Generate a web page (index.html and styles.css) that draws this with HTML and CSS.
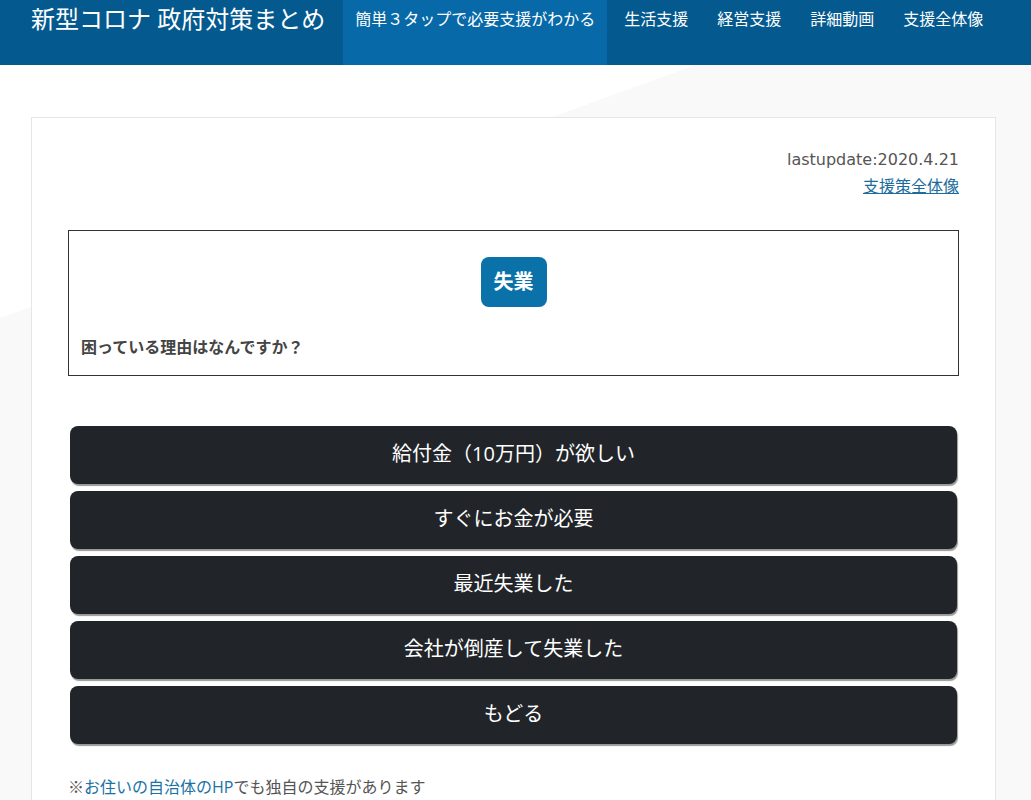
FILE: index.html
```html
<!DOCTYPE html>
<html lang="ja">
<head>
<meta charset="utf-8">
<title>新型コロナ 政府対策まとめ</title>
<link rel="stylesheet" href="styles.css">
</head>
<body>
<header class="topbar">
  <div class="brand">新型コロナ 政府対策まとめ</div>
  <nav>
    <ul class="nav">
      <li class="active"><a href="#">簡単３タップで必要支援がわかる</a></li>
      <li><a href="#">生活支援</a></li>
      <li><a href="#">経営支援</a></li>
      <li><a href="#">詳細動画</a></li>
      <li><a href="#">支援全体像</a></li>
    </ul>
  </nav>
</header>
<main class="wrap">
  <section class="card">
    <div class="meta">
      <div class="update">lastupdate:2020.4.21</div>
      <a class="overview" href="#">支援策全体像</a>
    </div>
    <div class="qbox">
      <div class="badge-row"><span class="badge">失業</span></div>
      <p class="question">困っている理由はなんですか？</p>
    </div>
    <div class="choices">
      <a class="choice" href="#">給付金（10万円）が欲しい</a>
      <a class="choice" href="#">すぐにお金が必要</a>
      <a class="choice" href="#">最近失業した</a>
      <a class="choice" href="#">会社が倒産して失業した</a>
      <a class="choice" href="#">もどる</a>
    </div>
    <p class="note">※<a href="#">お住いの自治体のHP</a>でも独自の支援があります</p>
  </section>
</main>
</body>
</html>
```
FILE: styles.css
```css
html, body {
  margin: 0;
  padding: 0;
}
body {
  font-family: "Open Sans", "Noto Sans CJK JP", sans-serif;
  color: #555;
  background: linear-gradient(160deg, #ffffff 0, #ffffff 26%, #f9f9f9 26%, #f9f9f9 100%);
  min-height: 800px;
}
a { text-decoration: none; }

.topbar {
  display: flex;
  align-items: flex-start;
  height: 65px;
  background: #045a8f;
}
.brand {
  padding-left: 31px;
  font-size: 24px;
  line-height: 38px;
  color: #fff;
  white-space: nowrap;
}
.nav {
  display: flex;
  gap: 5px;
  list-style: none;
  margin: 0 0 0 18px;
  padding: 0;
}
.nav li a {
  display: block;
  height: 65px;
  padding: 0 12px;
  font-size: 16px;
  line-height: 38px;
  color: #fff;
  white-space: nowrap;
}
.nav li.active a {
  background: #0769a8;
}

.wrap {
  padding: 52px 35px 0 31px;
}
.card {
  background: #fff;
  border: 1px solid #e6e6e6;
  padding: 29px 36px 0 36px;
  min-height: 700px;
}
.meta {
  text-align: right;
  font-size: 16px;
  line-height: 26px;
}
.update {
  color: #555;
  font-family: "DejaVu Sans", "Noto Sans CJK JP", sans-serif;
}
.overview {
  color: #1b6c9c;
  text-decoration: underline;
}
.qbox {
  margin-top: 31px;
  border: 1px solid #333;
  padding: 26px 12px 16px 12px;
}
.badge-row { text-align: center; }
.badge {
  display: inline-block;
  height: 50px;
  line-height: 50px;
  padding: 0 13px;
  border-radius: 8px;
  background: #0a72a8;
  color: #fff;
  font-size: 20px;
  font-weight: bold;
}
.question {
  margin: 28px 0 0 0;
  font-size: 16px;
  line-height: 24px;
  font-weight: bold;
  color: #444;
}
.choices {
  display: flex;
  flex-direction: column;
  gap: 7px;
  margin: 50px 2px 0 2px;
}
.choice {
  display: block;
  height: 58px;
  line-height: 56px;
  border-radius: 8px;
  background: #212529;
  color: #fff;
  font-size: 20px;
  text-align: center;
  box-shadow: 1px 2px 1px rgba(0, 0, 0, 0.4);
}
.note {
  margin: 31px 0 0 0;
  font-size: 16px;
  line-height: 24px;
  color: #555;
}
.note a { color: #1a72a6; }
```
